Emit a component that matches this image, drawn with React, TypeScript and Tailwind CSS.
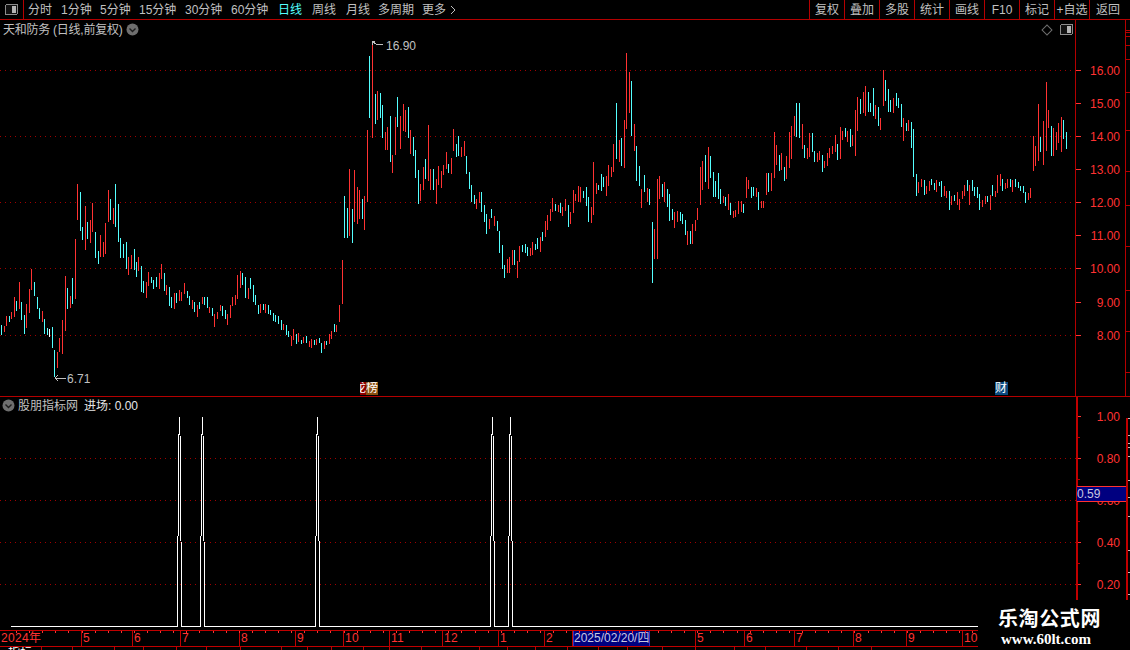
import React from 'react';

// bars read off the chart: "x top bottom colour", measured at 3x inside each block
const blocks = [
  {
    ox: 0,
    oy: 170,
    raw: '3 465 495 c,12 468 485 r,18 438 468 r,27 438 456 c,33 426 447 r,42 381 441 r,48 393 423 c,57 336 417 r,63 396 450 c,72 435 492 c,78 402 474 r,87 357 429 r,93 297 360 r,102 336 378 c,111 381 417 c,117 414 447 c,126 423 456 r,132 447 492 c,141 474 495 c,147 477 501 w,156 471 534 c,162 540 620 c,171 546 594 r,177 504 546 r,186 450 552 r,195 318 483 r,201 354 417 c,210 378 414 r,216 324 402 c,225 207 387 r,232 42 150 r,240 66 183 c,246 171 210 c,255 108 240 r,261 156 207 c,270 150 219 r,276 99 186 r,285 186 264 c,294 243 282 c,300 195 261 r,309 216 261 r,315 159 252 r,324 60 156 r,330 87 150 c,339 114 162 r,346 42 171 c,354 102 216 c,360 204 264 c,369 222 264 c,378 216 297 c,384 261 315 r,393 255 297 r,402 237 300 c,408 276 321 c,414 261 303 r,423 288 366 c,429 333 369 c,438 336 384 r,444 306 348 r,453 321 339 c,459 330 357 c,468 321 351 c,477 309 357 r,483 282 327 r,492 309 363 c,498 345 375 r,507 351 408 c,513 381 414 c,522 369 417 r,528 369 399 c,537 360 393 r,543 366 393 r,552 339 372 r,561 363 384 c,567 378 405 c,576 390 417 r,582 396 426 c,591 405 441 r,597 396 417 c,606 381 402 r,612 381 405 c,621 381 414 c,627 411 429 r,636 414 438 c,642 432 471 r,651 426 447 r,660 405 423 r,666 408 438 c,675 420 447 c,681 432 465 r,690 405 444 r,696 381 408 r,705 375 405 r,712 315 387 r,720 303 354 r,726 309 345 c,735 321 384 c,744 354 387 r,750 324 357 c,759 345 396 c,765 375 405 c,774 405 432 c,780 402 429 r,789 402 420 c,795 402 429 r,804 405 432 c,810 420 435 c,819 429 453 c,825 435 456 c,834 438 462 c,843 450 480 c,849 462 480 r,858 465 495 c,864 483 501 c,873 498 528 r,880 477 510 r,888 492 522 c,894 489 516 r,903 510 522 c,909 501 519 r,918 498 519 c,927 513 531 r,933 507 534 r,942 510 525 c,948 507 525 r,957 504 519 c,964 519 549 c,972 513 537 r,978 513 525 c,987 492 522 r,993 483 507 r,1003 462 486 c,1009 465 486 r,1018 405 456 r,1027 270 402 r',
  },
  {
    ox: 340,
    oy: 30,
    raw: '13 498 624 c,22 534 624 c,28 417 618 r,37 537 639 c,43 420 576 r,52 471 582 r,58 480 567 r,67 507 567 c,73 498 600 r,82 300 516 r,88 78 264 c,97 36 324 r,106 192 282 c,112 183 270 r,121 189 264 c,127 225 324 c,136 306 360 r,142 291 360 r,151 258 396 c,157 375 429 r,166 261 375 r,172 201 291 c,181 258 357 r,190 222 303 r,196 240 306 r,205 231 324 c,211 300 372 r,220 321 378 c,226 360 444 c,235 420 522 c,241 462 513 r,250 411 480 r,256 387 447 c,265 285 453 r,271 417 480 r,280 417 480 c,289 447 522 r,295 408 465 r,304 423 474 r,310 405 435 r,319 366 417 r,325 402 429 c,334 384 432 r,340 297 363 r,349 342 381 c,355 318 378 c,364 351 381 r,373 333 378 r,379 378 432 c,388 426 477 c,394 465 516 c,403 495 522 c,409 507 537 r,418 486 519 r,424 486 546 c,433 525 576 c,439 552 612 c,448 567 597 r,454 537 564 c,463 558 588 r,472 573 603 c,478 603 669 c,487 645 717 c,493 705 744 c,502 687 729 r,508 681 729 r,517 660 705 r,523 660 705 c,532 693 744 r,538 648 696 r,547 645 666 c,556 642 669 c,562 651 678 c,571 654 678 r,577 636 675 r,586 642 660 c,592 624 657 c,601 621 666 r,607 606 633 c,616 573 621 r,622 555 600 r,631 537 573 r,637 504 546 r,646 522 543 c,655 525 546 r,661 519 549 c,667 531 558 r,676 507 543 r,685 525 591 c,691 546 582 r,700 480 549 r,706 492 513 r,715 468 516 r,721 471 516 r,730 483 504 c,739 471 528 c,745 501 576 c,754 531 579 r,760 396 555 r,769 459 492 r,775 465 480 c,784 432 483 c,790 441 471 c,799 438 498 r,805 405 468 r,814 411 441 r,820 342 426 r,829 219 387 c,838 330 396 r,844 324 408 c,853 270 414 r,859 69 297 r,868 126 249 r,874 153 318 c,883 282 363 r,889 348 453 c,898 408 468 c,904 477 534 r,913 435 486 c,922 474 516 r,928 477 525 c,937 576 759 c,943 597 687 r,952 447 687 r,958 438 507 r,967 462 501 c,973 456 516 r,982 477 531 c,988 492 573 c,997 537 570 c,1003 546 594 r,1012 543 576 r,1021 546 573 c,1027 552 582 c,1036 570 615 c,1042 603 645 r,1051 603 642 c,1057 582 642 r,1066 570 603 r,1072 534 570 r,1081 411 525 r,1087 393 480 r,1096 375 456 c,1105 351 477 r,1111 378 444 c,1120 426 501 c,1126 453 501 c,1135 429 507 c',
  },
  {
    ox: 700,
    oy: 60,
    raw: '61 387 432 c,70 408 429 r,76 411 438 c,85 402 450 r,91 429 465 c,100 453 474 r,106 450 471 r,115 423 462 r,124 423 456 r,130 432 459 c,139 351 414 r,145 360 387 r,154 381 414 c,160 381 408 c,169 384 411 r,175 396 450 c,184 423 444 r,190 423 444 r,199 339 405 r,205 339 396 c,214 339 393 r,223 216 354 r,229 255 315 r,238 285 333 c,244 279 330 r,253 321 363 c,259 288 357 r,268 216 324 r,274 198 297 r,283 168 228 r,289 129 231 c,298 129 234 c,307 192 267 r,313 255 294 c,322 264 297 r,328 219 291 r,337 219 276 c,343 273 306 c,352 279 306 r,358 273 300 r,367 285 336 c,373 303 324 r,382 279 318 r,388 264 294 r,397 258 282 r,406 225 276 r,412 252 300 c,421 201 297 r,427 213 240 r,436 204 231 c,442 213 246 r,451 207 261 c,457 225 258 r,466 150 288 r,472 111 213 r,481 117 162 c,490 96 159 r,496 78 168 r,505 96 156 c,511 129 156 c,520 84 168 c,526 135 177 r,535 141 198 c,541 174 210 r,550 30 138 r,556 60 123 c,565 87 156 c,571 120 156 c,580 114 159 r,589 99 138 c,595 114 144 c,604 132 201 c,610 174 243 r,619 189 213 c,625 180 213 r,634 186 264 c,640 207 351 c,649 342 408 c,655 366 399 r,664 357 381 r,673 360 405 c,679 378 402 r,688 363 393 r,694 357 375 c,703 369 390 c,709 360 396 r,718 366 378 c,724 363 411 c,733 378 408 r,739 393 414 r,748 393 450 c,754 408 435 r,763 405 423 c,772 396 435 r,778 417 450 r,787 393 417 r,793 375 408 r,802 360 393 c,808 375 435 r,817 360 393 c,823 381 408 c,832 381 414 c,838 402 450 c,847 420 441 r,856 408 432 r,862 408 426 c,871 405 450 r,877 375 408 c,886 393 411 r,892 345 399 r,901 342 378 r,907 357 393 c,916 369 387 r,922 357 384 r,931 357 381 c,937 360 396 r,946 357 381 c,955 366 384 c,961 378 393 c,970 378 399 c,976 396 429 c,985 399 420 r,991 384 414 r,1000 228 333 r,1006 258 318 r,1015 132 303 r,1021 231 276 c,1030 183 315 r,1039 66 273 r,1045 150 204 r,1054 198 288 c,1060 204 288 r,1069 216 270 r,1075 189 249 r,1084 171 276 r,1090 180 237 c,1099 216 267 c',
  },
];

const barColors: Record<string, string> = { r: '#ff3232', c: '#54ffff', w: '#ffffff' };

const bars = blocks.flatMap((b) =>
  b.raw.split(',').map((s) => {
    const [x, top, bottom, c] = s.split(' ');
    const y = b.oy + Math.round(+top / 3);
    return {
      x: b.ox + Math.floor(+x / 3),
      y,
      h: b.oy + Math.round(+bottom / 3) - y,
      fill: barColors[c],
    };
  })
);

const tabs = [
  { label: '分时', cls: 'w-[33px]' },
  { label: '1分钟', cls: 'w-[39px]' },
  { label: '5分钟', cls: 'w-[39px]' },
  { label: '15分钟', cls: 'w-[46px]' },
  { label: '30分钟', cls: 'w-[46px]' },
  { label: '60分钟', cls: 'w-[47px]' },
  { label: '日线', cls: 'w-[34px] text-[#54ffff]' },
  { label: '周线', cls: 'w-[34px]' },
  { label: '月线', cls: 'w-[32px]' },
  { label: '多周期', cls: 'w-[44px]' },
  { label: '更多', cls: 'w-[28px]' },
];

const tools = ['复权', '叠加', '多股', '统计', '画线', 'F10', '标记', '+自选'];

const priceTicks = [
  { y: 70, label: '16.00' },
  { y: 103, label: '15.00' },
  { y: 136, label: '14.00' },
  { y: 169, label: '13.00' },
  { y: 202, label: '12.00' },
  { y: 235, label: '11.00' },
  { y: 268, label: '10.00' },
  { y: 302, label: '9.00' },
  { y: 335, label: '8.00' },
];

const indexTicks = [
  { y: 416, label: '1.00' },
  { y: 458, label: '0.80' },
  { y: 500, label: '0.60' },
  { y: 542, label: '0.40' },
  { y: 584, label: '0.20' },
];

const spikes = [179.5, 202.5, 317.5, 492.5, 510.5];

const months = [
  { label: '2024年', cls: 'w-[82px]' },
  { label: '5', cls: 'w-[51px]' },
  { label: '6', cls: 'w-[48px]' },
  { label: '7', cls: 'w-[59px]' },
  { label: '8', cls: 'w-[56px]' },
  { label: '9', cls: 'w-[48px]' },
  { label: '10', cls: 'w-[46px]' },
  { label: '11', cls: 'w-[53px]' },
  { label: '12', cls: 'w-[56px]' },
  { label: '1', cls: 'w-[46px]' },
  { label: '2', cls: 'w-[28px]' },
];

const monthsAfter = [
  { label: '', cls: 'w-[46px]' },
  { label: '5', cls: 'w-[49px]' },
  { label: '6', cls: 'w-[50px]' },
  { label: '7', cls: 'w-[59px]' },
  { label: '8', cls: 'w-[53px]' },
  { label: '9', cls: 'w-[56px]' },
  { label: '10', cls: 'w-[60px]' },
];

const footerCells = ['w-[42px]', 'w-[31px]', 'w-[42px]', 'w-[29px]', 'w-[33px]', 'w-[30px]', 'w-[34px]', 'w-[41px]', 'w-[26px]', 'w-[24px]', 'w-[32px]', 'w-[26px]', 'w-[32px]', 'w-[58px]', 'w-[28px]', 'w-[28px]', 'w-[32px]', 'w-[31px]', 'w-[29px]', 'w-[35px]', 'w-[33px]', 'w-[39px]', 'w-[31px]', 'w-[41px]', 'w-[32px]', 'w-[33px]'];

const Chevron = () => (
  <svg width="13" height="13" viewBox="0 0 13 13" className="shrink-0">
    <circle cx="6.5" cy="6.5" r="6" fill="#6e6e6e" />
    <path d="M3.5 5.5 L6.5 8.5 L9.5 5.5" fill="none" stroke="#1c1c1c" strokeWidth="1.4" />
  </svg>
);

const PanelIcon = () => (
  <svg width="13" height="12" viewBox="0 0 13 12" shapeRendering="crispEdges">
    <rect x="0.5" y="0.5" width="12" height="10" rx="1.5" fill="#111" stroke="#8c8c8c" />
    <rect x="7" y="2" width="4" height="7" fill="#b4b4b4" />
  </svg>
);

export default function App() {
  return (
    <div className="relative w-[1130px] h-[650px] overflow-hidden bg-black text-[12px] leading-none text-[#c0c0c0] font-['Liberation_Sans','Noto_Sans_CJK_SC',sans-serif]">
      {/* toolbar */}
      <div className="flex h-[20px] border-b border-[#b40000]">
        <div className="flex w-[24px] items-center justify-center border-r border-[#b40000]">
          <PanelIcon />
        </div>
        <div className="flex flex-1 items-center pl-[4px]">
          {tabs.map((t) => (
            <span key={t.label} className={t.cls}>
              {t.label}
            </span>
          ))}
          <svg width="6" height="10" viewBox="0 0 6 10">
            <path d="M1 1 L5 5 L1 9" fill="none" stroke="#c0c0c0" />
          </svg>
        </div>
        {tools.map((t) => (
          <div key={t} className="flex w-[35px] items-center justify-center whitespace-nowrap border-l border-[#b40000]">
            {t}
          </div>
        ))}
        <div className="flex w-[41px] items-center border-l border-[#b40000] pl-[6px]">返回</div>
      </div>

      {/* price panel */}
      <div className="flex h-[377px] border-b border-[#b40000]">
        <div className="relative w-[1075px]">
          <div className="absolute left-[3px] top-[3px] flex items-center gap-[4px]">
            <span className="tracking-[-0.25px]">天和防务 (日线,前复权)</span>
            <Chevron />
          </div>
          <div className="absolute left-[1043px] top-[4px] flex items-center gap-[9px]">
            <span className="block h-[8px] w-[8px] rotate-45 border border-[#6e6e6e]" />
            <PanelIcon />
          </div>
          <svg width="1075" height="376" viewBox="0 20 1075 376" shapeRendering="crispEdges" className="block">
            {[70, 136, 202, 268, 335].map((y) => (
              <line key={y} x1="0" x2="1075" y1={y + 0.5} y2={y + 0.5} stroke="#a00000" strokeDasharray="1 4" />
            ))}
            {bars.map((b, i) => (
              <rect key={i} x={b.x} y={b.y} width="1" height={b.h} fill={b.fill} />
            ))}
            <g fill="none" stroke="#c0c0c0">
              <path d="M372 45 V41 H375 M372 41 L376 44 H383" />
              <path d="M55 378 L58 375 M55 378 H66 M55 378 L58 381" />
            </g>
            <text x="386" y="50" fill="#c0c0c0" fontSize="12">16.90</text>
            <text x="67" y="383" fill="#c0c0c0" fontSize="12">6.71</text>
          </svg>
          <div className="absolute left-[360px] top-[362px] flex h-[13px] w-[18px] overflow-hidden text-white">
            <span className="flex w-[6px] justify-end overflow-hidden bg-[#8c0000] leading-[13px]">龙</span>
            <span className="w-[12px] bg-[#8c5010] leading-[13px]">榜</span>
          </div>
          <div className="absolute left-[995px] top-[362px] h-[13px] w-[13px] bg-[#0c4a80] leading-[13px] text-white">财</div>
        </div>
        <div className="w-[55px] border-l border-[#b40000]">
          <svg width="54" height="376" viewBox="1076 20 54 376" shapeRendering="crispEdges" className="block">
            {priceTicks.map((t) => (
              <g key={t.y}>
                <line x1="1076" x2="1081" y1={t.y + 0.5} y2={t.y + 0.5} stroke="#ff3232" />
                <text x="1120" y={t.y + 5} textAnchor="end" fill="#ff3232" fontSize="12">{t.label}</text>
              </g>
            ))}
            <line x1="1125.5" x2="1125.5" y1="20" y2="396" stroke="#b40000" />
            {[30, 32, 36, 45, 59, 92, 130, 171, 205, 246, 290, 331, 372].map((y) => (
              <line key={y} x1="1126" x2="1130" y1={y + 0.5} y2={y + 0.5} stroke="#b40000" />
            ))}
          </svg>
        </div>
      </div>

      {/* indicator panel */}
      <div className="flex h-[233px]">
        <div className="relative w-[1076px]">
          <div className="absolute left-[2px] top-[2px] flex items-center gap-[3px]">
            <Chevron />
            <span>股朋指标网</span>
            <span className="ml-[3px] text-[#e6e6e6]">进场: 0.00</span>
          </div>
          <svg width="1076" height="233" viewBox="0 397 1076 233" className="block">
            <g shapeRendering="crispEdges">
              {indexTicks.slice(1).map((t) => (
                <line key={t.y} x1="0" x2="1076" y1={t.y + 0.5} y2={t.y + 0.5} stroke="#a00000" strokeDasharray="1 4" />
              ))}
              <polyline
                points={`11,626.5 ${spikes.map((x) => `${x - 2},626.5 ${x - 1},452 ${x},417 ${x + 1},452 ${x + 2},626.5`).join(' ')} 978,626.5`}
                fill="none"
                stroke="#ffffff"
                strokeWidth="1"
              />
            </g>
          </svg>
        </div>
        <div className="relative w-[54px] border-l-2 border-[#c00000]">
          <svg width="52" height="233" viewBox="1078 397 52 233" shapeRendering="crispEdges" className="block">
            {indexTicks.map((t) => (
              <g key={t.y}>
                <line x1="1078" x2="1081" y1={t.y + 0.5} y2={t.y + 0.5} stroke="#ff3232" />
                <line x1="1078" x2="1080" y1={t.y + 21.5} y2={t.y + 21.5} stroke="#b40000" />
                <text x="1120" y={t.y + 5} textAnchor="end" fill="#ff3232" fontSize="12">{t.label}</text>
              </g>
            ))}
            <rect x="1126" y="418" width="2" height="212" fill="#c00000" />
            {[418, 435, 443, 447, 456, 480, 497, 516, 550, 572, 594].map((y) => (
              <line key={y} x1="1128" x2="1130" y1={y + 0.5} y2={y + 0.5} stroke="#c0c0c0" />
            ))}
          </svg>
          <div className="absolute left-[-1px] top-[89px] flex h-[16px] w-[49px] items-center border-y border-[#ff3232] bg-[#000080] text-[#c8c8e0]">
            0.59
          </div>
        </div>
      </div>

      {/* date strip */}
      <div className="relative flex h-[17px] items-center border-y border-[#c00000] text-[#ff3232]">
        {months.map((m, i) => (
          <div key={i} className={`${m.cls} h-full border-r border-[#c00000] pl-[1px] leading-[15px] tracking-[0.3px]`}>
            {m.label}
          </div>
        ))}
        <div className="h-[15px] w-[77px] overflow-hidden whitespace-nowrap border-x border-[#3030c0] bg-[#000080] text-center leading-[15px] text-[#c8c8e0]">
          2025/02/20/四
        </div>
        {monthsAfter.map((m, i) => (
          <div key={i} className={`${m.cls} h-full border-r border-[#c00000] pl-[1px] leading-[15px]`}>
            {m.label}
          </div>
        ))}
        <svg width="978" height="3" viewBox="0 0 978 3" shapeRendering="crispEdges" className="absolute left-0 top-0">
          {Array.from({ length: 74 }, (_, i) => (
            <rect key={i} x={16 + i * 13.1} y="0" width="1" height="2" fill="#ff3232" />
          ))}
        </svg>
      </div>

      {/* clipped status row */}
      <div className="flex h-[3px] overflow-hidden">
        {footerCells.map((w, i) => (
          <div key={i} className={`${w} h-full border-r border-[#c00000] pl-[8px] leading-[12px] text-white`}>
            {i === 0 ? '指标' : ''}
          </div>
        ))}
      </div>

      {/* watermark */}
      <div className="absolute left-[978px] top-[600px] flex h-[50px] w-[152px] flex-col bg-black pl-[20px] pt-[9px] text-white">
        <span className="text-[20px] font-bold leading-[20px] tracking-[0.6px]">乐淘公式网</span>
        <span className="mt-[3px] pl-[3px] text-[15px] font-bold leading-[15px] font-['Liberation_Serif',serif]">www.60lt.com</span>
      </div>
    </div>
  );
}
